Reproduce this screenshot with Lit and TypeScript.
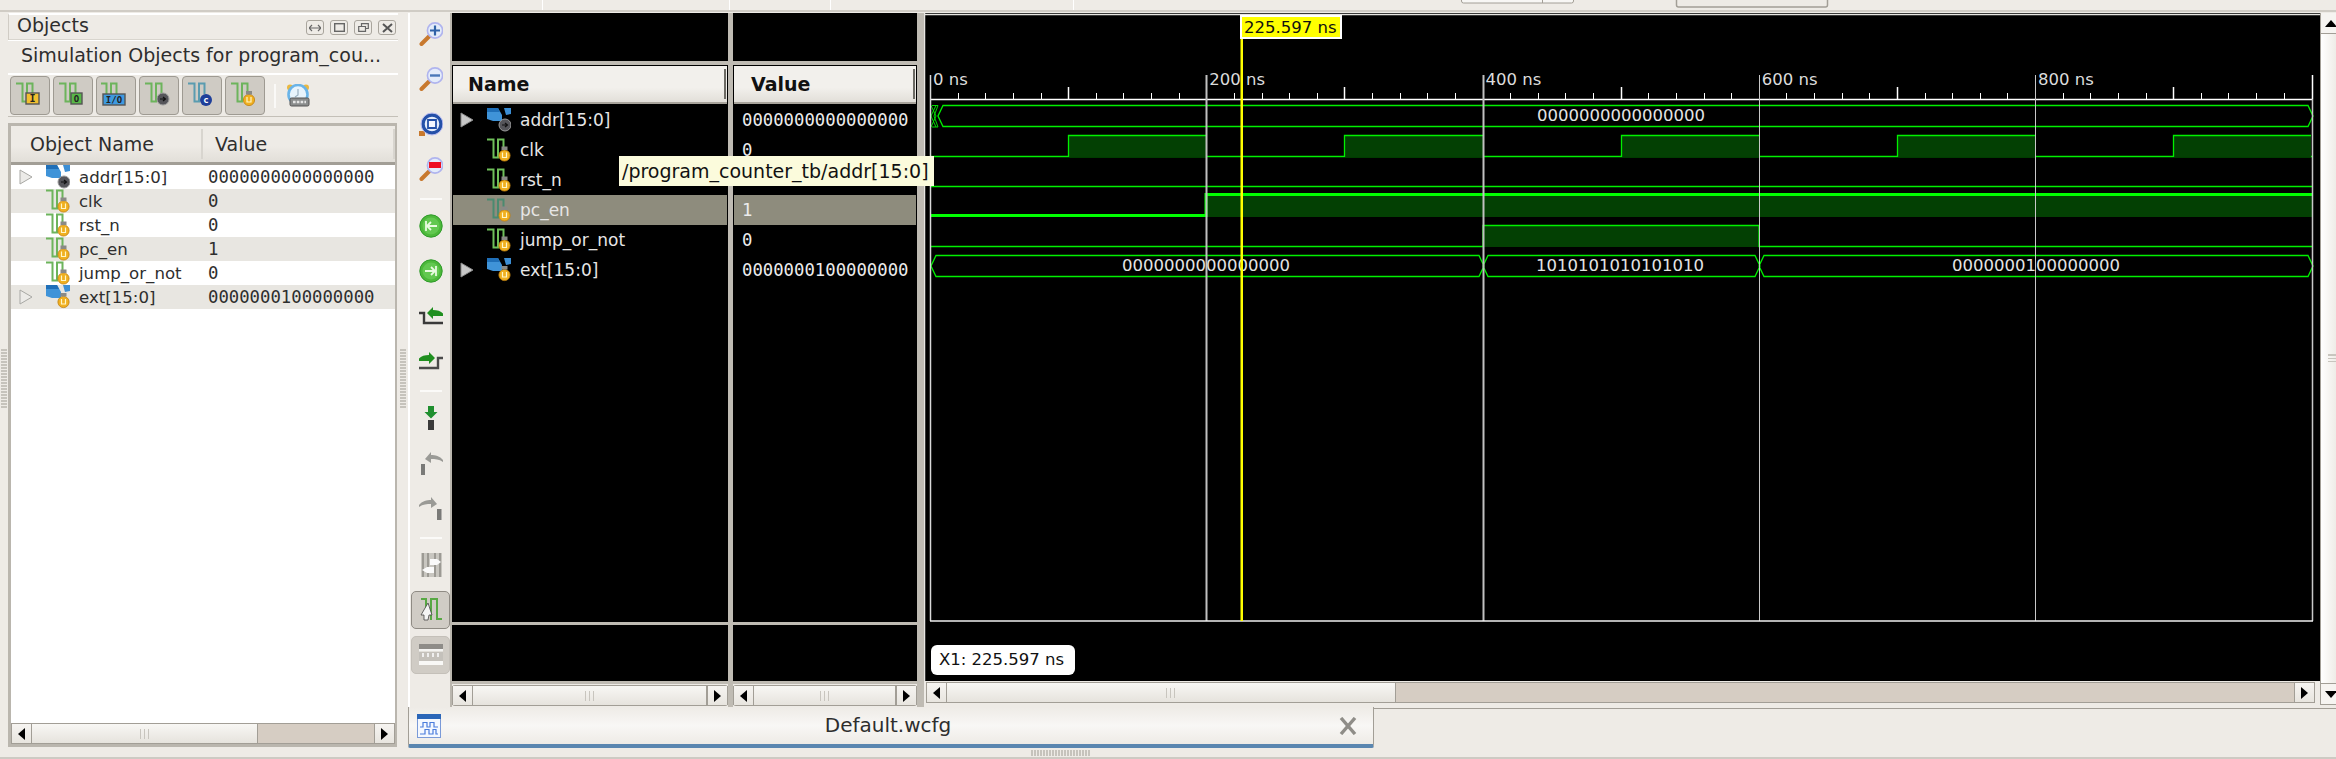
import { LitElement, html, svg, css } from "lit";
import { customElement } from "lit/decorators.js";

const SIGNALS = [
  { name: "addr[15:0]", value: "0000000000000000", bus: true, badge: "gear" },
  { name: "clk", value: "0", bus: false, badge: "u" },
  { name: "rst_n", value: "0", bus: false, badge: "u" },
  { name: "pc_en", value: "1", bus: false, badge: "u" },
  { name: "jump_or_not", value: "0", bus: false, badge: "u" },
  { name: "ext[15:0]", value: "0000000100000000", bus: true, badge: "u" },
];

// waveform scale: 200 ns is 276.25 px, measured on the ruler
const X0 = 930;
const xAt = (ns: number) => X0 + (ns * 276.25) / 200;
const END = 2313;

const icon = (w: number, h: number, body: unknown) =>
  html`<svg width=${w} height=${h} viewBox="0 0 ${w} ${h}">${body}</svg>`;

const uBadge = (cx: number, cy: number) => svg`
  <circle cx=${cx} cy=${cy} r="5.6" fill="#f0b020" stroke="#c08010" stroke-width="0.8"/>
  <path d="M${cx - 2} ${cy - 3}v5h4v-5" fill="none" stroke="#fff6c8" stroke-width="1.2"/>
  <rect x=${cx - 3} y=${cy - 9} width="6" height="3.5" fill="#8a8a86"/>`;

const gearBadge = (cx: number, cy: number) => svg`
  <circle cx=${cx} cy=${cy} r="6" fill="#55555a" stroke="#9a9a9a" stroke-width="1"/>
  <path d="M${cx - 3} ${cy}h5M${cx} ${cy - 2}l2.5 2-2.5 2" fill="none" stroke="#111" stroke-width="1.2"/>`;

const pulse = (color = "#6db45c") =>
  svg`<path d="M0 1.5H6.5V19.5H11V1.5H16.5V12" fill="none" stroke=${color} stroke-width="2"/>`;

const signalIcon = (color?: string) => icon(24, 24, svg`${pulse(color)}${uBadge(17.5, 17.5)}`);

const busIcon = (badge: string) =>
  icon(24, 24, svg`
    <path d="M0 0H11L15 7V13H6L0 11Z" fill="#3f93d8"/>
    <path d="M0 0H11L13 4H0Z" fill="#1f6fb8"/>
    <path d="M17 0H24V6L19 7Z" fill="#3c8ed4"/>
    ${badge === "gear" ? gearBadge(18, 17) : uBadge(17.5, 17)}`);

const lens = (inner: unknown) => icon(24, 24, svg`
  <path d="M2.5 22L10 14.5" stroke="#c8792e" stroke-width="4" stroke-linecap="round"/>
  <circle cx="16" cy="8.5" r="7.6" fill="#e4ecfa" stroke="#b0b4ee" stroke-width="1.6"/>
  ${inner}`);

const zoomIn = () => lens(svg`<path d="M11 8.5H21M16 3.5V13.5" stroke="#2f62a8" stroke-width="2.2"/>`);
const zoomOut = () => lens(svg`<path d="M11 8.5H21" stroke="#4a78b8" stroke-width="2.4"/>`);
const zoomArea = () => lens(svg`<rect x="10" y="5" width="12" height="6" fill="#ee0f22"/>`);
const zoomFit = () => icon(24, 24, svg`
  <rect x="0" y="19" width="6" height="5" fill="#c8792e"/>
  <circle cx="13" cy="12" r="9" fill="#e4ecfa" stroke="#2450a8" stroke-width="3.4"/>
  <circle cx="13" cy="12" r="11" fill="none" stroke="#b4b8f0" stroke-width="1"/>
  <path d="M9 8H17V16H9Z" fill="#f4f6ff" stroke="#2450a8" stroke-width="1.8"/>`);

const greenRound = (path: string) => icon(24, 24, svg`
  <circle cx="12" cy="12" r="11.2" fill="#4cb83a" stroke="#2f9a2a" stroke-width="1"/>
  <circle cx="12" cy="12" r="8.5" fill="#62c850"/>
  <path d=${path} fill="none" stroke="#e8fbe0" stroke-width="1.8"/>`);

const stepPrev = () => icon(24, 24, svg`
  <path d="M0 9H5V19H24" fill="none" stroke="#3a3a3a" stroke-width="2.4"/>
  <path d="M8 9L14 3V6C18 6 22 7 24 9.5V12H14V15Z" fill="#1f8f1f"/>`);
const stepNext = () => icon(24, 24, svg`
  <path d="M0 19H19V9H24" fill="none" stroke="#4a4a4a" stroke-width="2.4"/>
  <path d="M16 9L10 3V6C6 6 2 7 0 9.5V12H10V15Z" fill="#1f8f1f"/>`);
const addMarker = () => icon(24, 24, svg`
  <path d="M9 0H15V6H18.5L12 12.5L5.5 6H9Z" fill="#1f8f2f"/>
  <rect x="9" y="14" width="6" height="10" fill="#3a3a3a"/>`);
const prevMarker = () => icon(24, 24, svg`
  <rect x="2" y="13" width="4" height="11" fill="#7a7a78"/>
  <path d="M6 8L12 1V4C16 4 21 5 24 9V11C20 8 16 8 12 8V12Z" fill="#9a9a96"/>`);
const nextMarker = () => icon(24, 24, svg`
  <rect x="18" y="13" width="4.5" height="11" fill="#7a7a78"/>
  <path d="M18 8L12 1V4C8 4 3 5 0 9V11C4 8 8 8 12 8V12Z" fill="#9a9a96"/>`);
const swapIcon = () => icon(24, 24, svg`
  <rect x="2" y="0" width="21" height="24" fill="#c8c6c0"/>
  <path d="M4 0V24M9 0V24M16 0V24M21 0V24" stroke="#9c9a94" stroke-width="2"/>
  <path d="M11 6H18L22 9L18 12H11Z" fill="#fafafa"/>
  <path d="M15 14H8L3 17L8 20H15Z" fill="#fafafa"/>`);
const waveCursor = () => icon(24, 24, svg`
  <path d="M2 1H7V22M7 1M12 22V1H18V21H23" fill="none" stroke="#58a844" stroke-width="2"/>
  <path d="M9 5L2 17L5 17L5 22L9 22L10 17L13 17Z" fill="#f4f4f4" stroke="#444" stroke-width="0.8"/>`);
const rulerIcon = () => icon(24, 24, svg`
  <rect x="0" y="1" width="24" height="5" fill="#8e8c88"/>
  <rect x="0" y="6" width="24" height="2.5" fill="#f4f4f2"/>
  <rect x="0" y="9" width="24" height="9" fill="#c4c1bb"/>
  <path d="M4 10V14M9 10V14M14 10V14M19 10V14" stroke="#efefef" stroke-width="2"/>
  <rect x="0" y="18" width="24" height="4" fill="#f8f8f6"/>`);
const alarmIcon = () => icon(24, 24, svg`
  <circle cx="4" cy="3.5" r="3" fill="#eab840"/><circle cx="20" cy="3.5" r="3" fill="#eab840"/>
  <circle cx="12" cy="10.5" r="9.5" fill="#e8f4fc" stroke="#6ab4e8" stroke-width="2.6"/>
  <path d="M12 5V11L9 13" stroke="#9ab0c0" stroke-width="1.2" fill="none"/>
  <rect x="4" y="14" width="19" height="8" rx="1.5" fill="#8a8c8c" stroke="#555" stroke-width="1"/>
  <path d="M7 18H20" stroke="#e4e4e4" stroke-width="2.4" stroke-dasharray="2.6 1.2"/>`);
const tabIcon = () => icon(24, 24, svg`
  <rect x="0.5" y="0.5" width="23" height="23" fill="#f4f8ff" stroke="#7a9ad8"/>
  <rect x="0" y="0" width="24" height="5" fill="#2a66b8"/>
  <path d="M3 13H6V8.5H10V13H13V8.5H17V13H21M3 20H8V15.5H12V20H16V15.5H19V20H21" fill="none" stroke="#4a7cdc" stroke-width="1.2"/>`);

const badgeText = (label: string, bg: string, w = 12, size = 8) => svg`
  <rect x=${24 - w} y="12" width=${w} height="11" fill=${bg} stroke="#555" stroke-width="1.4"/>
  <text x=${24 - w / 2} y="21" text-anchor="middle" class="badge" font-size=${size}>${label}</text>`;

const TOOL_ICONS = [
  icon(30, 30, svg`<g transform="translate(1 1)">${pulse()}</g>${badgeText("I", "#f2bf30", 13, 10)}`),
  icon(30, 30, svg`<g transform="translate(1 1)">${pulse()}</g>${badgeText("O", "#58b848", 11, 9)}`),
  icon(30, 30, svg`<g transform="translate(-1 1)">${pulse()}</g><rect x="2" y="13" width="22" height="11" fill="#3e9ae0" stroke="#555" stroke-width="1.4"/><text x="13" y="22" text-anchor="middle" class="badge" font-size="9">I/O</text>`),
  icon(30, 30, svg`<g transform="translate(1 1)">${pulse()}</g>${gearBadge(19, 18)}`),
  icon(30, 30, svg`<g transform="translate(1 1)">${pulse("#5a9cb0")}</g><circle cx="19" cy="19" r="6" fill="#1f3f9a"/><text x="19" y="22" text-anchor="middle" class="badge light" font-size="9">c</text>`),
  icon(30, 30, svg`<g transform="translate(1 1)">${pulse()}</g>${uBadge(19, 19)}`),
];

const scrollbar = (thumb?: number) => html`
  <div class="sb">
    <div class="sb-btn"><i class="arr left"></i></div>
    <div class="sb-thumb" style=${thumb ? `flex:0 0 ${thumb}px` : "flex:1"}><b></b></div>
    ${thumb ? html`<div class="sb-track"></div>` : ""}
    <div class="sb-btn"><i class="arr right"></i></div>
  </div>`;

const expander = (dark: boolean) => html`
  <svg class="exp" width="14" height="16" viewBox="0 0 14 16">
    <path d="M1 1L13 8L1 15Z" fill=${dark ? "#c8c8c8" : "#ecebe8"} stroke=${dark ? "#8a8a8a" : "#a8a8a4"}/>
  </svg>`;

@customElement("app-root")
export class AppRoot extends LitElement {
  static styles = css`
    :host {
      display: block;
      position: relative;
      width: 2336px;
      height: 759px;
      overflow: hidden;
      background: #eeebe6;
      font-family: "DejaVu Sans", sans-serif;
      color: #2e2e2e;
    }
    svg { display: block; flex: none; }
    .badge { font-family: "DejaVu Sans Mono", monospace; font-weight: 700; fill: #222; }
    .badge.light { fill: #fff; }

    .topstrip { height: 13px; }
    .body { display: grid; grid-template-columns: 8px 390px 10px 1928px; height: 735px; }
    .grip-col { display: flex; align-items: flex-start; justify-content: center; padding-top: 336px; }
    .grip { width: 6px; height: 60px; background: repeating-linear-gradient(#c6c3bc 0 2px, #eeebe6 2px 3px); }

    .objects { display: flex; flex-direction: column; height: 734px; }
    .title { height: 25px; display: flex; align-items: center; justify-content: space-between; padding: 0 2px 0 8px;
      border-top: 2px solid #fff; border-left: 1px solid #d0ccc5; font-size: 19px; box-shadow: inset 0 -1px #d8d5ce; }
    .title span { margin-bottom: 6px; }
    .win-btns { display: flex; gap: 6px; }
    .win-btn { width: 16px; height: 13px; border: 1.5px solid #a9a59d; border-radius: 3px; display: flex; align-items: center; justify-content: center; }
    .subtitle { height: 33px; line-height: 29px; padding-left: 13px; font-size: 19px; white-space: nowrap; border-top: 1px solid #fff; box-sizing: border-box; }
    .otools { height: 44px; box-sizing: border-box; border-top: 2px solid #fff; border-bottom: 1px solid #c4c0b8; display: flex; align-items: flex-start; padding: 1px 0 0 2px; gap: 3px; }
    .tbtn { width: 40px; height: 39px; box-sizing: border-box; background: #cfcbc4; border: 1.5px solid #9e9a92; border-radius: 4px; display: flex; align-items: center; justify-content: center; }
    .osep { width: 2px; height: 24px; background: #faf9f7; margin: 8px 7px 0 6px; }
    .alarm { margin-top: 8px; }
    .otable { margin-top: 6px; flex: 1; display: flex; flex-direction: column; border: 3px solid #bab6ae; border-right-width: 2px; border-bottom-width: 3px; background: #fff; margin-right: 1px; box-sizing: border-box; }
    .ohead { height: 39px; flex: none; box-sizing: border-box; display: grid; grid-template-columns: 190px 192px 2px; align-items: center; font-size: 19px;
      background: linear-gradient(#eeebe6 55%, #e2dfd9); border-bottom: 3px solid #a29e96; }
    .ohead span { height: 30px; line-height: 30px; }
    .ohead .n { padding-left: 19px; }
    .ohead .v { padding-left: 12px; border-left: 2px solid #d8d5cf; }
    .ohead .e { background: #d8d5cf; }
    .orows { flex: 1; }
    .orow { height: 24px; display: grid; grid-template-columns: 190px 1fr; align-items: center; font-size: 16.6px; }
    .orow:nth-child(even) { background: #e8e6e1; }
    .oname { display: flex; align-items: center; height: 24px; white-space: nowrap; }
    .oname .slot { width: 35px; padding-left: 8px; box-sizing: border-box; flex: none; }
    .oname .txt { margin-left: 9px; }
    .oval { font-family: "DejaVu Sans Mono", monospace; font-size: 17.3px; padding-left: 7px; }

    .sb { display: flex; height: 21px; box-sizing: border-box; border-top: 1.5px solid #a29e96; border-bottom: 1.5px solid #a29e96; background: #d6cdc3; flex: none; }
    .sb-btn { width: 21px; flex: none; background: linear-gradient(#f6f4f1, #e8e5df); border-left: 1.5px solid #a29e96; border-right: 1.5px solid #a29e96; box-sizing: border-box; display: flex; align-items: center; justify-content: center; }
    .sb-thumb { background: linear-gradient(#f8f7f4, #e6e3dd); display: flex; align-items: center; justify-content: center; border-right: 1.5px solid #a29e96; box-sizing: border-box; }
    .sb-thumb b { width: 10px; height: 10px; background: repeating-linear-gradient(90deg, #c8c5be 0 1.5px, transparent 1.5px 4px); }
    .sb-track { flex: 1; }
    .arr { width: 0; height: 0; border-style: solid; border-color: transparent; }
    .arr.left { border-width: 6px 7px 6px 0; border-right-color: #000; }
    .arr.right { border-width: 6px 0 6px 7px; border-left-color: #000; }

    .right { display: flex; flex-direction: column; }
    .editor { display: flex; height: 694px; }

    .rail { width: 44px; box-sizing: border-box; border-left: 2px solid #fff; border-right: 2px solid #bab6ae; display: flex; flex-direction: column; align-items: center; flex: none; padding-left: 1px; }
    .rail-in { margin-top: -1.5px; width: 100%; }
    .slot45 { height: 45px; display: flex; align-items: center; justify-content: center; }
    .slot12 { height: 12px; padding-top: 3px; box-sizing: border-box; display: flex; align-items: center; justify-content: center; }
    .slot12 i { width: 22px; height: 2px; background: #fbfaf8; }
    .rbtn { width: 39px; height: 38px; box-sizing: border-box; border-radius: 5px; background: #d0ccc5; display: flex; align-items: center; justify-content: center; }
    .rbtn.on { border: 1.5px solid #8f8b84; }
    .rbtn.off { border: 1.5px solid #c4c0b9; }

    .pane { display: flex; flex-direction: column; flex: none; height: 694px; }
    .pane.name { width: 276px; }
    .pane.value { width: 184px; }
    .black-top { height: 48px; background: #000; flex: none; }
    .hsash { height: 4px; background: #bfbbb3; flex: none; }
    .list { height: 557px; background: #000; flex: none; padding: 1px 1px 0; box-sizing: border-box; }
    .lhead { height: 38px; margin-bottom: 1px; box-sizing: border-box; display: flex; align-items: center; justify-content: space-between; font-weight: 700; font-size: 19px; color: #111;
      background: linear-gradient(#f2f0ec 60%, #e2dfd9); border-bottom: 2px solid #a8a49c; padding: 0 1px 0 15px; }
    .value .lhead { padding-left: 17px; }
    .lhead i { width: 2px; height: 30px; background: #6c6a64; }
    .lrow { height: 30px; display: flex; align-items: center; color: #e6e6e6; font-size: 17px; white-space: nowrap; }
    .lrow.sel { background: #8e8c7d; }
    .lrow .slot { width: 34px; padding-left: 7px; box-sizing: border-box; flex: none; }
    .lrow .txt { margin-left: 9px; }
    .vrow { height: 30px; line-height: 30px; color: #ececec; font-family: "DejaVu Sans Mono", monospace; font-size: 17.3px; padding-left: 8px; }
    .vrow.sel { background: #8e8c7d; }
    .black-bot { height: 56px; background: #000; flex: none; }
    .pane .sb { margin-top: 1px; border-radius: 3px; }
    .pane .hsash.low { height: 3px; }
    .vsash { flex: none; background: #bfbbb3; }
    .vsash.a { width: 5px; }
    .vsash.b { width: 7px; }

    .wave { width: 1396px; flex: none; display: flex; flex-direction: column; }
    .wave-sb { height: 21px; flex: none; margin: 1px 5px 0 2px; }
    .wtext { font-family: "DejaVu Sans", sans-serif; font-size: 16.5px; }

    .vscroll { width: 16px; flex: none; height: 692px; display: flex; flex-direction: column; border-left: 1.5px solid #a29e96; box-sizing: border-box; background: linear-gradient(90deg, #fff, #efece7); }
    .vbtn { height: 20px; flex: none; display: flex; align-items: center; justify-content: center; background: #f6f4f1; border-bottom: 1.5px solid #a29e96; padding-left: 4px; }
    .vbtn.down { border-top: 1.5px solid #a29e96; border-bottom: 1.5px solid #a29e96; }
    .vmid { flex: 1; display: flex; align-items: center; justify-content: flex-end; padding-bottom: 2px; }
    .vmid b { width: 8px; height: 8px; background: repeating-linear-gradient(#c8c5be 0 1.5px, transparent 1.5px 3.5px); }
    .arr.up { border-width: 0 6px 7px; border-bottom-color: #000; }
    .arr.down { border-width: 7px 6px 0; border-top-color: #000; }

    .tabbar { height: 41px; display: flex; align-items: stretch; border-top: 0; position: relative; }
    .tab { width: 966px; flex: none; box-sizing: border-box; display: flex; align-items: center; padding: 0 16px 0 8px; font-size: 20px; border-left: 1.5px solid #a29e96; border-right: 1.5px solid #a29e96; border-bottom: 4px solid #5a86b0; border-radius: 0 0 2px 2px;
      background: linear-gradient(#eeebe6, #f8f7f5 50%, #eeebe6); }
    .tab .label { flex: 1; text-align: center; padding-right: 4px; line-height: 30px; margin-bottom: 2px; }
    .tab-rest { flex: 1; border-top: 1.5px solid #a29e96; box-shadow: inset 0 1.5px #fff; margin-top: 1px; height: 0; }
    .foot { position: absolute; left: 0; right: 0; top: 757px; height: 2px; background: #cdcac3; }
    .foot-grip { position: absolute; left: 1031px; top: 750px; width: 59px; height: 6px; background: repeating-linear-gradient(90deg, #c6c3bc 0 2px, #eeebe6 2px 3px); }
    .tooltip { position: absolute; left: 619px; top: 156px; width: 315px; height: 30px; box-sizing: border-box; background: #fbfbdc; color: #111; font-size: 19px; line-height: 30px; padding-left: 3px; white-space: nowrap; }
  `;

  renderTop() {
    return html`<svg class="topstrip" width="2336" height="13" viewBox="0 0 2336 13">
      <path d="M542.5 0V10M729.5 0V10M830.5 0V10M1073.5 0V10" stroke="#fff"/>
      <rect x="1461.5" y="-3" width="112" height="6" rx="2" fill="#f8f7f5" stroke="#a29e96"/>
      <path d="M1542.5 0V3" stroke="#a29e96"/>
      <rect x="1676.5" y="-4" width="151" height="11" rx="2" fill="#eeebe6" stroke="#a29e96" stroke-width="1.5"/>
      <rect x="0" y="10" width="2336" height="2" fill="#d0ccc5"/>
    </svg>`;
  }

  renderObjects() {
    return html`<div class="objects">
      <div class="title">
        <span>Objects</span>
        <div class="win-btns">
          <div class="win-btn">${icon(12, 8, svg`<path d="M0 4H12M3 1L0 4L3 7M9 1L12 4L9 7" fill="none" stroke="#666" stroke-width="1.2"/>`)}</div>
          <div class="win-btn">${icon(11, 9, svg`<rect x="0.7" y="0.7" width="9.6" height="7.6" fill="none" stroke="#666" stroke-width="1.4"/>`)}</div>
          <div class="win-btn">${icon(11, 9, svg`<path d="M3.5 3V.7H10.3V5.5H7.5M.7 3.5H7.5V8.3H.7Z" fill="none" stroke="#666" stroke-width="1.2"/>`)}</div>
          <div class="win-btn">${icon(11, 10, svg`<path d="M1 1L10 9M10 1L1 9" stroke="#555" stroke-width="2"/>`)}</div>
        </div>
      </div>
      <div class="subtitle">Simulation Objects for program_cou...</div>
      <div class="otools">
        ${TOOL_ICONS.map((t) => html`<div class="tbtn">${t}</div>`)}
        <div class="osep"></div>
        <div class="alarm">${alarmIcon()}</div>
      </div>
      <div class="otable">
        <div class="ohead"><span class="n">Object Name</span><span class="v">Value</span><span class="e"></span></div>
        <div class="orows">
          ${SIGNALS.map((s) => html`<div class="orow">
            <div class="oname">
              <div class="slot">${s.bus ? expander(false) : ""}</div>
              ${s.bus ? busIcon(s.badge) : signalIcon()}
              <span class="txt">${s.name}</span>
            </div>
            <div class="oval">${s.value}</div>
          </div>`)}
        </div>
        ${scrollbar(226)}
      </div>
    </div>`;
  }

  renderRail() {
    const slot = (i: unknown) => html`<div class="slot45">${i}</div>`;
    const sep = html`<div class="slot12"><i></i></div>`;
    return html`<div class="rail"><div class="rail-in">
      ${[zoomIn(), zoomOut(), zoomFit(), zoomArea()].map(slot)}
      ${sep}
      ${[greenRound("M7 7V17M18 12H8M12 8L8 12L12 16"), greenRound("M17 7V17M6 12H16M12 8L16 12L12 16")].map(slot)}
      ${[stepPrev(), stepNext()].map(slot)}
      ${sep}
      ${[addMarker(), prevMarker(), nextMarker()].map(slot)}
      ${sep}
      ${slot(swapIcon())}
      ${slot(html`<div class="rbtn on">${waveCursor()}</div>`)}
      ${slot(html`<div class="rbtn off">${rulerIcon()}</div>`)}
    </div></div>`;
  }

  renderNames() {
    return html`<div class="pane name">
      <div class="black-top"></div>
      <div class="hsash"></div>
      <div class="list">
        <div class="lhead"><span>Name</span><i></i></div>
        ${SIGNALS.map((s, i) => html`<div class="lrow ${i === 3 ? "sel" : ""}">
          <div class="slot">${s.bus ? expander(true) : ""}</div>
          ${s.bus ? busIcon(s.badge) : signalIcon(i === 3 ? "#4a8a70" : "#6fc05a")}
          <span class="txt">${s.name}</span>
        </div>`)}
      </div>
      <div class="hsash low"></div>
      <div class="black-bot"></div>
      <div class="hsash low"></div>
      ${scrollbar()}
    </div>`;
  }

  renderValues() {
    return html`<div class="pane value">
      <div class="black-top"></div>
      <div class="hsash"></div>
      <div class="list">
        <div class="lhead"><span>Value</span><i></i></div>
        ${SIGNALS.map((s, i) => html`<div class="vrow ${i === 3 ? "sel" : ""}">${s.value}</div>`)}
      </div>
      <div class="hsash low"></div>
      <div class="black-bot"></div>
      <div class="hsash low"></div>
      ${scrollbar()}
    </div>`;
  }

  renderWave() {
    const bright = "#00f000";
    const dim = "#034003";
    const clk: number[] = [100, 300, 500, 700, 900];
    const ticks = [];
    for (let ns = 0; ns < 1001; ns += 20) {
      if (ns % 200 === 0) continue;
      const x = Math.round(xAt(ns)) + 0.5;
      ticks.push(svg`<path d="M${x} ${ns % 100 === 0 ? 87 : 93}V99" stroke="#fff" stroke-width=${ns % 100 === 0 ? 1.5 : 1}/>`);
    }
    const busShape = (a: number, b: number, top: number, bot: number) =>
      svg`<path d="M${a} ${(top + bot) / 2}L${a + 5} ${top}H${b - 5}L${b} ${(top + bot) / 2}L${b - 5} ${bot}H${a + 5}Z" fill="none" stroke=${bright} stroke-width="1.3"/>`;
    const busText = (x: number, y: number, t: string) =>
      svg`<text x=${x} y=${y} text-anchor="middle" class="wtext" fill="#e4e4e4">${t}</text>`;
    const x200 = Math.round(xAt(200));
    const x400 = Math.round(xAt(400));
    const x600 = Math.round(xAt(600));
    return html`<div class="wave">
      <svg width="1396" height="668" viewBox="924 13 1396 668">
        <rect x="924" y="13" width="1396" height="668" fill="#000"/>
        <path d="M924.5 13V681M924 14.5H2320" stroke="#e8e6e2" stroke-width="1.5"/>

        ${[0, 200, 400, 600, 800].map((ns) => svg`
          <text x=${xAt(ns) + 3} y="85" class="wtext" fill="#dcdcdc">${ns} ns</text>`)}
        <path d="M930 99.5H${END}" stroke="#fff" stroke-width="1.5"/>
        <path d="M${END - 0.5} 75V99" stroke="#fff" stroke-width="1.5"/>
        ${ticks}

        <!-- addr -->
        <path d="M931 105.5L936 116L931 127M936 105.5L931 116L936 127M932 105.5H938L934 116L938 127H932" fill="none" stroke=${bright} stroke-width="0.9"/>
        ${busShape(938, END, 105.5, 126.5)}
        ${busText(1621, 121, "0000000000000000")}

        <!-- clk -->
        <path d="M930 156.5H${END}" stroke=${bright} stroke-width="1.3"/>
        ${clk.map((ns) => {
          const a = Math.round(xAt(ns));
          const b = Math.min(Math.round(xAt(ns + 100)), END);
          return svg`<rect x=${a} y="135" width=${b - a} height="22" fill=${dim}/>
            <path d="M${a + 0.5} 157V135.5H${b}" fill="none" stroke=${bright} stroke-width="1.3"/>`;
        })}

        <!-- rst_n -->
        <path d="M930 186.5H${END}" stroke=${bright} stroke-width="1.3"/>

        <!-- pc_en (selected, drawn heavier) -->
        <rect x=${x200} y="195" width=${END - x200} height="22" fill=${dim}/>
        <path d="M930 215.5H${x200}V194.5H${END}" fill="none" stroke="#00ff00" stroke-width="3"/>

        <!-- jump_or_not -->
        <rect x=${x400} y="225" width=${x600 - x400} height="22" fill=${dim}/>
        <path d="M930 246.5H${x400}V225.5H${x600}V246.5H${END}" fill="none" stroke=${bright} stroke-width="1.3"/>

        <!-- ext -->
        ${busShape(931, x400 + 1, 255.5, 276.5)}
        ${busShape(x400, x600 + 1, 255.5, 276.5)}
        ${busShape(x600, END, 255.5, 276.5)}
        ${busText(1206, 271, "0000000000000000")}
        ${busText(1620, 271, "1010101010101010")}
        ${busText(2036, 271, "0000000100000000")}

        <!-- grid and frame -->
        <path d="M930.5 75V621" stroke="#d8d8d8" stroke-width="1.5"/>
        <path d="M${x200 + 0.5} 75V621M${x400 + 0.5} 75V621" stroke="#c0c0c0" stroke-width="2"/>
        <path d="M${x600 + 0.5} 75V621M${Math.round(xAt(800)) + 0.5} 75V621" stroke="#c8c8c8"/>
        <path d="M${END - 0.5} 99V621" stroke="#c8c8c8" stroke-width="1.5"/>
        <path d="M930 621H${END}" stroke="#f0f0f0" stroke-width="1.5"/>

        <!-- cursor -->
        <rect x="1240.5" y="36" width="2.5" height="585" fill="#ffff00"/>
        <rect x="1241" y="16" width="100" height="22" fill="#ffff00" stroke="#fff" stroke-width="2"/>
        <text x="1244" y="33" class="wtext" fill="#111">225.597 ns</text>

        <rect x="931" y="645" width="144" height="30" rx="6" fill="#fff"/>
        <text x="939" y="665" class="wtext" fill="#111">X1: 225.597 ns</text>
      </svg>
      <div class="wave-sb">${scrollbar(449)}</div>
    </div>`;
  }

  render() {
    return html`
      ${this.renderTop()}
      <div class="body">
        <div class="grip-col"><div class="grip"></div></div>
        ${this.renderObjects()}
        <div class="grip-col"><div class="grip"></div></div>
        <div class="right">
          <div class="editor">
            ${this.renderRail()}
            ${this.renderNames()}
            <div class="vsash a"></div>
            ${this.renderValues()}
            <div class="vsash b"></div>
            ${this.renderWave()}
            <div class="vscroll">
              <div class="vbtn"><i class="arr up"></i></div>
              <div class="vmid"><b></b></div>
              <div class="vbtn down"><i class="arr down"></i></div>
            </div>
          </div>
          <div class="tabbar">
            <div class="tab">
              ${tabIcon()}
              <span class="label">Default.wcfg</span>
              ${icon(18, 18, svg`<path d="M2 1L16 17M16 1L2 17" stroke="#8f8d88" stroke-width="3.4"/>`)}
            </div>
            <div class="tab-rest"></div>
          </div>
        </div>
      </div>
      <div class="foot-grip"></div>
      <div class="foot"></div>
      <div class="tooltip">/program_counter_tb/addr[15:0]</div>
    `;
  }
}
